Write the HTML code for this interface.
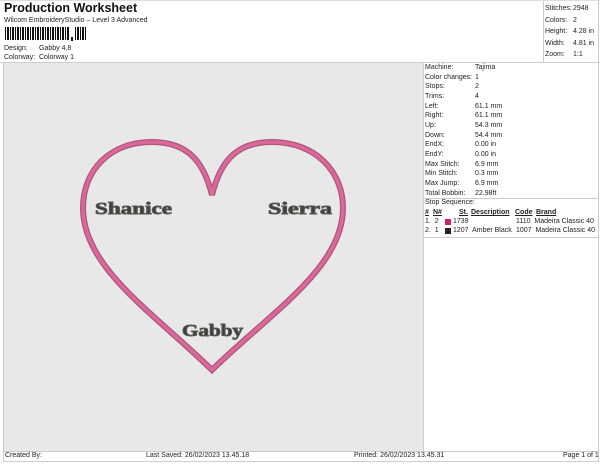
<!DOCTYPE html>
<html><head><meta charset="utf-8"><style>
*{margin:0;padding:0;box-sizing:border-box}
body{width:600px;height:464px;background:#fff;font-family:"Liberation Sans",sans-serif;color:#222;position:relative;overflow:hidden;font-size:7px}
.a{position:absolute;white-space:nowrap}
.l{position:absolute;background:#ccc}
</style></head><body>
<div class="a" style="left:4px;top:1px;font-size:12.5px;font-weight:bold;color:#111">Production Worksheet</div>
<div class="a" style="left:4px;top:17px;font-size:7px">Wilcom EmbroideryStudio – Level 3 Advanced</div>
<svg class="a" style="left:5px;top:27px" width="85" height="17">
<g fill="#111">
<rect x="0" y="0" width="1" height="13"/><rect x="2" y="0" width="2" height="13"/><rect x="5" y="0" width="1" height="13"/><rect x="7" y="0" width="2" height="13"/><rect x="10" y="0" width="1" height="13"/><rect x="12" y="0" width="2" height="13"/><rect x="15" y="0" width="1" height="13"/><rect x="17" y="0" width="2" height="13"/><rect x="20" y="0" width="1" height="13"/><rect x="22" y="0" width="2" height="13"/><rect x="25" y="0" width="1" height="13"/><rect x="27" y="0" width="2" height="13"/><rect x="30" y="0" width="1" height="13"/><rect x="32" y="0" width="2" height="13"/><rect x="35" y="0" width="1" height="13"/><rect x="37" y="0" width="2" height="13"/><rect x="40" y="0" width="1" height="13"/><rect x="42" y="0" width="2" height="13"/><rect x="45" y="0" width="1" height="13"/><rect x="47" y="0" width="2" height="13"/><rect x="50" y="0" width="1" height="13"/><rect x="52" y="0" width="2" height="13"/><rect x="55" y="0" width="1" height="13"/><rect x="57" y="0" width="2" height="13"/><rect x="60" y="0" width="1" height="13"/><rect x="62" y="0" width="2" height="13"/>
<rect x="66" y="10" width="2" height="4"/>
<rect x="70" y="0" width="1" height="13"/><rect x="72" y="0" width="2" height="13"/><rect x="75" y="0" width="1" height="13"/><rect x="77" y="0" width="2" height="13"/><rect x="80" y="0" width="1" height="13"/>
</g></svg>
<div class="a" style="left:4px;top:45px">Design:</div><div class="a" style="left:39px;top:45px">Gabby 4,8</div>
<div class="a" style="left:4px;top:54px">Colorway:</div><div class="a" style="left:39px;top:54px">Colorway 1</div>
<div class="l" style="left:0;top:62px;width:600px;height:1px"></div>
<div class="l" style="left:598px;top:0;width:1px;height:462px"></div>
<div class="l" style="left:543px;top:0;width:1px;height:62px"></div>
<div class="l" style="left:0;top:0;width:600px;height:1px;background:#ddd"></div>
<div class="a" style="left:545px;top:3px;line-height:11.5px">Stitches:<br>Colors:<br>Height:<br>Width:<br>Zoom:</div>
<div class="a" style="left:573px;top:3px;line-height:11.5px">2948<br>2<br>4.28 in<br>4.81 in<br>1:1</div>
<div class="a" style="left:4px;top:63px;width:419px;height:388px;background:#e8e8e8"></div>
<div class="l" style="left:423px;top:62px;width:1px;height:389px"></div>
<div class="l" style="left:3px;top:62px;width:1px;height:400px"></div>
<svg class="a" style="left:4px;top:63px" width="419" height="388">
<path d="M208 132 C200 100 185 79 148 79 C105 79 79 108 79 145 C79 205 150 250 208 307 C266 250 339 205 339 145 C339 108 311 79 268 79 C231 79 216 100 208 132 Z" fill="none" stroke="#b0557c" stroke-width="6" stroke-linejoin="miter"/>
<path d="M208 132 C200 100 185 79 148 79 C105 79 79 108 79 145 C79 205 150 250 208 307 C266 250 339 205 339 145 C339 108 311 79 268 79 C231 79 216 100 208 132 Z" fill="none" stroke="#d8699a" stroke-width="3.5" stroke-linejoin="miter"/>
<g font-family="Liberation Serif,serif" font-weight="bold" font-size="17" fill="#3e403c" stroke="#555752" stroke-width="0.9">
<text x="91" y="151" textLength="77" lengthAdjust="spacingAndGlyphs">Shanice</text>
<text x="264" y="151" textLength="64" lengthAdjust="spacingAndGlyphs">Sierra</text>
<text x="178" y="273" textLength="61" lengthAdjust="spacingAndGlyphs">Gabby</text>
</g></svg>
<div class="a" style="left:425px;top:63px;line-height:9.65px">Machine:<br>Color changes:<br>Stops:<br>Trims:<br>Left:<br>Right:<br>Up:<br>Down:<br>EndX:<br>EndY:<br>Max Stitch:<br>Min Stitch:<br>Max Jump:<br>Total Bobbin:</div>
<div class="a" style="left:475px;top:63px;line-height:9.65px">Tajima<br>1<br>2<br>4<br>61.1 mm<br>61.1 mm<br>54.3 mm<br>54.4 mm<br>0.00 in<br>0.00 in<br>6.9 mm<br>0.3 mm<br>6.9 mm<br>22.98ft</div>
<div class="l" style="left:423px;top:198px;width:175px;height:1px"></div>
<div class="a" style="left:425px;top:199px">Stop Sequence:</div>
<div class="a" style="left:425px;top:209px;font-weight:bold;text-decoration:underline">#</div>
<div class="a" style="left:433px;top:209px;font-weight:bold;text-decoration:underline">N#</div>
<div class="a" style="left:459px;top:209px;font-weight:bold;text-decoration:underline">St.</div>
<div class="a" style="left:471px;top:209px;font-weight:bold;text-decoration:underline">Description</div>
<div class="a" style="left:515px;top:209px;font-weight:bold;text-decoration:underline">Code</div>
<div class="a" style="left:536px;top:209px;font-weight:bold;text-decoration:underline">Brand</div>
<div class="a" style="left:425px;top:218px">1.&nbsp; 2</div><div class="a" style="left:445px;top:219px;width:6px;height:6px;background:#c8246a"></div><div class="a" style="left:453px;top:218px">1739</div><div class="a" style="left:516px;top:218px">1110&nbsp; Madeira Classic 40</div>
<div class="a" style="left:425px;top:227px">2.&nbsp; 1</div><div class="a" style="left:445px;top:228px;width:6px;height:6px;background:#222"></div><div class="a" style="left:453px;top:227px">1207&nbsp; Amber Black</div><div class="a" style="left:516px;top:227px">1007&nbsp; Madeira Classic 40</div>
<div class="l" style="left:423px;top:237px;width:175px;height:1px"></div>
<div class="l" style="left:3px;top:451px;width:596px;height:1px"></div>
<div class="l" style="left:3px;top:461px;width:596px;height:1px"></div>
<div class="a" style="left:5px;top:452px">Created By:</div>
<div class="a" style="left:146px;top:452px">Last Saved: 26/02/2023 13.45.18</div>
<div class="a" style="left:354px;top:452px">Printed: 26/02/2023 13.45.31</div>
<div class="a" style="left:563px;top:452px">Page 1 of 1</div>
</body></html>
